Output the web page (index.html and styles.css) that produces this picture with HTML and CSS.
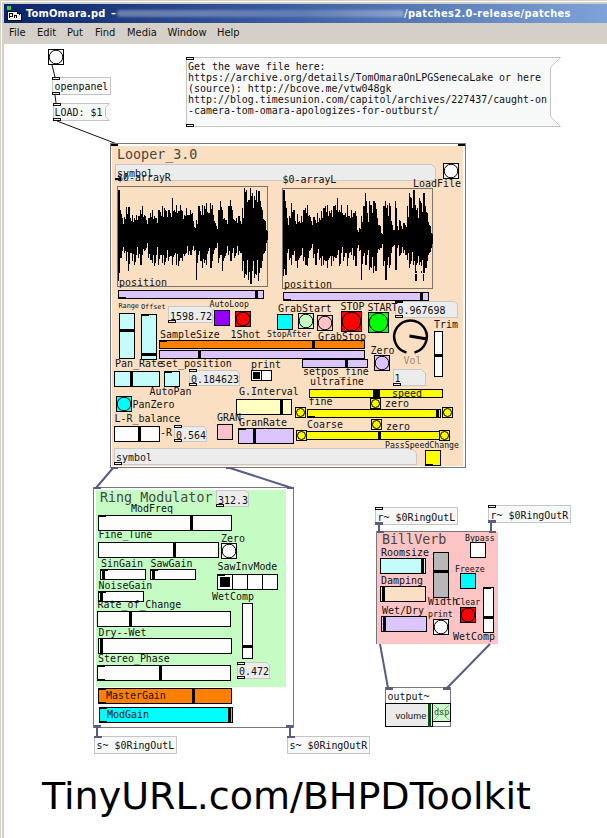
FILE: index.html
```html
<!DOCTYPE html>
<html lang="en">
<head>
<meta charset="utf-8">
<title>TomOmara.pd</title>
<link rel="stylesheet" href="styles.css">
</head>
<body>
<div class="window">
<header class="titlebar">
<svg class="app-icon" width="15" height="16" viewBox="0 0 15 16" shape-rendering="crispEdges"><rect width="4" height="4" fill="#3bd13b"/><path d="M0 5H10V7H14V14H0Z" fill="#eee" stroke="#111"/><path d="M2.5 12V7.500H5.500V10H2.500M7.500 12V9H9.500V12M12.500 8V9" fill="none" stroke="#000"/></svg>
<span class="file">TomOmara.pd</span><span class="dash">–</span><span class="smudge"></span><span class="folder">/patches2.0-release/patches</span>
</header>
<nav class="menu"><span>File</span><span>Edit</span><span>Put</span><span>Find</span><span>Media</span><span>Window</span><span>Help</span></nav>
<main>
<svg class="canvas" width="603" height="794" viewBox="4 44 603 794">
<!-- loader objects -->
<g class="wire"><path d="M52 65L55 77M55 95L56 103M57 121L117 144"/></g>
<g class="box"><rect x="52.500" y="77.500" width="58" height="17"/><path d="M53.500 103.500H109.500L105.500 107.500V116.500L109.500 120.500H53.500Z"/><path d="M186.500 57.500H560.500L550.500 67.500V116.500L560.500 126.500H186.500Z"/></g>
<g class="w"><rect x="48.500" y="49.500" width="15" height="15"/></g><circle cx="56" cy="57" r="6.800"/>
<g class="let"><rect x="52.500" y="77.500" width="7" height="2"/><rect x="52.500" y="92.500" width="7" height="2"/><rect x="53.500" y="103.500" width="7" height="2"/><rect x="53.500" y="118.500" width="7" height="2"/><rect x="186.500" y="57.500" width="7" height="2"/><rect x="186.500" y="124.500" width="7" height="2"/></g>
<text x="54.500" y="90">openpanel</text><text x="54.500" y="115.500">LOAD: $1</text>
<text x="188" y="70">Get the wave file here:</text>
<text x="188" y="81">https://archive.org/details/TomOmaraOnLPGSenecaLake or here</text>
<text x="188" y="92">(source): http://bcove.me/vtw048gk</text>
<text x="188" y="103">http://blog.timesunion.com/capitol/archives/227437/caught-on</text>
<text x="188" y="114">-camera-tom-omara-apologizes-for-outburst/</text>

<!-- Looper -->
<rect class="frame" x="110.500" y="143.500" width="355" height="324"/>
<rect x="112" y="146" width="351" height="320" fill="#fadfc3"/>
<path class="k" d="M111 144h7v2h-7zM458 144h7v2h-7z"/>
<g class="num"><path d="M115.500 164.500H431.500L435.500 168.500V180.500H115.500Z"/><path d="M168.500 306.500H209.500L212.500 309.500V322.500H168.500Z"/><path d="M395.500 301.500H454.500L457.500 304.500V317.500H395.500Z"/><path d="M393.500 369.500H421.500L425.500 373.500V385.500H393.500Z"/><path d="M189.500 370.500H236.500L239.500 373.500V385.500H189.500Z"/><path d="M174.500 426.500H203.500L206.500 429.500V441.500H174.500Z"/><path d="M114.500 448.500H411.500L416.500 453.500V464.500H114.500Z"/></g>
<text class="big" x="117" y="158.700">Looper_3.0</text>
<text x="117" y="177">symbol</text><text x="117" y="181">$0-arrayR</text><text x="282.500" y="183">$0-arrayL</text>
<path class="k" d="M115 178h6v2h-6z"/>
<rect class="plot" x="117.500" y="186.500" width="150" height="100"/><rect class="plot" x="282.500" y="188.500" width="150" height="100"/>
<path class="wave" id="wave-r"/><path class="wave" id="wave-l"/>
<path d="M410.500 270V264M413.500 268v-3M416.500 271v-6M409 273.500h16M418.500 269v-6M421.500 271v-5" stroke="#fadfc3" fill="none" shape-rendering="crispEdges"/>
<text x="119" y="286">position</text><text x="284" y="288">position</text>
<text x="413" y="187">LoadFile</text>
<g class="w"><rect x="443.500" y="163.500" width="15" height="15"/><rect x="434.500" y="331.500" width="8" height="45"/><rect x="251.500" y="370.500" width="20" height="10"/><rect x="114.500" y="426.500" width="45" height="15"/></g>
<g class="v"><rect x="118.500" y="290.500" width="145" height="8"/><rect x="283.500" y="292.500" width="145" height="8"/><rect x="159.500" y="350.500" width="205" height="8"/><rect x="302.500" y="359.500" width="65" height="8"/><rect x="374.500" y="355.500" width="15" height="15"/><rect x="238.500" y="428.500" width="55" height="15"/></g>
<g class="c"><rect x="119.500" y="313.500" width="15" height="45"/><rect x="141.500" y="314.500" width="15" height="45"/><rect x="114.500" y="371.500" width="45" height="15"/><rect x="164.500" y="371.500" width="15" height="15"/></g>
<g class="s"><rect x="214.500" y="310.500" width="15" height="15" fill="#9600ff"/><rect x="235.500" y="311.500" width="15" height="15" fill="#f00"/><rect x="277.500" y="314.500" width="15" height="15" fill="#00fcfc"/><rect x="298.500" y="313.500" width="15" height="15" fill="#c4fcc4"/><rect x="317.500" y="315.500" width="15" height="15" fill="#fcc4c4"/><rect x="341.500" y="311.500" width="20" height="20" fill="#f00"/><rect x="368.500" y="312.500" width="20" height="20" fill="#0f0"/><rect x="159.500" y="340.500" width="205" height="8" fill="#ff7f00"/><rect x="116.500" y="396.500" width="15" height="15" fill="#00fcfc"/><rect x="217.500" y="424.500" width="15" height="15" fill="#fcc0c8"/><rect x="236.500" y="399.500" width="55" height="15" fill="#ffffc0"/></g>
<g class="y"><rect x="309.500" y="389.500" width="133" height="8"/><rect x="307.500" y="409.500" width="133" height="8"/><rect x="306.500" y="431.500" width="133" height="8"/><rect x="370.500" y="398.500" width="10" height="10"/><rect x="295.500" y="407.500" width="10" height="10"/><rect x="442.500" y="407.500" width="10" height="10"/><rect x="371.500" y="419.500" width="10" height="10"/><rect x="296.500" y="430.500" width="10" height="10"/><rect x="439.500" y="430.500" width="10" height="10"/><rect x="425.500" y="450.500" width="15" height="15"/></g>
<circle cx="451" cy="171" r="6.800"/><circle cx="243" cy="319" r="6.800"/><circle cx="306" cy="321" r="6.800"/><circle cx="325" cy="323" r="6.800"/><circle cx="351.500" cy="321.500" r="9.300"/><circle cx="378.500" cy="322.500" r="9.300"/><circle cx="382" cy="363" r="6.800"/><circle cx="124" cy="404" r="6.800"/>
<circle cx="375.500" cy="403.500" r="4"/><circle cx="300.500" cy="412.500" r="4"/><circle cx="447.500" cy="412.500" r="4"/><circle cx="376.500" cy="424.500" r="4"/><circle cx="301.500" cy="435.500" r="4"/><circle cx="444.500" cy="435.500" r="4"/>
<path class="k" d="M255 291h3v8h-3zM420 293h3v8h-3zM120 329h15v3h-15zM142 353h15v3h-15zM312 341h3v8h-3zM198 351h3v8h-3zM345 360h3v8h-3zM435 354h8v3h-8zM130 372h3v15h-3zM138 427h3v15h-3zM280 400h3v15h-3zM253 429h3v15h-3zM373 390h7v8h-7zM436 410h3v8h-3zM378 432h3v8h-3zM253 372h7v7h-7zM261 371h1v10h-1zM119 297h7v1h-7zM284 299h7v1h-7zM142 315h7v1h-7zM160 341h7v1h-7zM165 372h7v1h-7zM308 416h7v1h-7zM239 429h7v1h-7zM426 464h7v1h-7z"/>
<g class="let"><rect x="168.500" y="320.500" width="7" height="2"/><rect x="395.500" y="301.500" width="7" height="1"/><rect x="395.500" y="315.500" width="7" height="2"/><rect x="393.500" y="383.500" width="7" height="2"/><rect x="189.500" y="369.500" width="7" height="2"/><rect x="189.500" y="383.500" width="7" height="2"/><rect x="174.500" y="425.500" width="7" height="2"/><rect x="174.500" y="439.500" width="7" height="2"/><rect x="114.500" y="462.500" width="7" height="2"/></g>
<path class="dial" d="M406.500 352.500A16.300 16.300 0 1 1 414.500 352.500"/><path class="needle" d="M409.500 336L427 339"/>
<text class="tiny" x="118.500" y="308">Range</text><text class="tiny" x="141" y="309">Offset</text>
<text x="170" y="319.500">1598.72</text><text class="small" x="209.500" y="307">AutoLoop</text>
<text x="160" y="338">SampleSize</text><text x="230.500" y="337.500">1Shot</text><text class="small" x="267" y="337">StopAfter</text><text x="318" y="339.500">GrabStop</text>
<text x="278" y="311.500">GrabStart</text><text x="340.500" y="310">STOP</text><text x="367.500" y="311">START</text><text x="397.500" y="314">0.967698</text>
<text x="434" y="328">Trim</text><text class="vol" x="403.500" y="364">Vol</text><text x="370.500" y="353.500">Zero</text>
<text x="115" y="367">Pan_Rate</text><text x="160" y="366.500">set_position</text><text x="251" y="367.500">print</text>
<text x="303" y="375">setpos_fine</text><text x="310" y="385">ultrafine</text><text x="394.500" y="382">1</text>
<text x="191" y="382.500">0.184623</text><text x="149.500" y="395">AutoPan</text><text x="132.500" y="407.500">PanZero</text><text x="239" y="394.500">G.Interval</text>
<text x="114.500" y="422">L-R_balance</text><text x="160" y="436">-R</text><text x="176" y="438.500">0.564</text><text x="217" y="421">GRAN</text><text x="239" y="426">GranRate</text>
<text x="392" y="397">speed</text><text x="308.500" y="405">fine</text><text x="385" y="407">zero</text><text x="307" y="427.500">Coarse</text><text x="386" y="429.500">zero</text>
<text class="small" x="385" y="448">PassSpeedChange</text><text x="116" y="461">symbol</text>

<!-- Ring modulator -->
<rect class="frame" x="93.500" y="487.500" width="200" height="240"/>
<rect x="96" y="490" width="190" height="197" fill="#c4fcc4"/>
<g class="signal"><path d="M113 468L96 488M230 468L292 488M97 727V737M290 727V737"/></g>
<path class="sig" d="M94 487h7v2h-7zM287 487h7v2h-7zM94 725h7v3h-7zM286 725h7v3h-7zM111 467h7v2h-7zM226 467h7v2h-7z"/>
<g class="box"><rect x="94.500" y="736.500" width="82" height="17"/><rect x="287.500" y="736.500" width="82" height="17"/></g>
<path class="sig" d="M94 736h8v2h-8zM287 736h8v2h-8z"/>
<g class="num"><path d="M216.500 490.500H245.500L248.500 493.500V506.500H216.500Z"/><path d="M237.500 662.500H266.500L269.500 665.500V678.500H237.500Z"/></g>
<g class="w"><rect x="98.500" y="515.500" width="133" height="15"/><rect x="98.500" y="542.500" width="120" height="15"/><rect x="221.500" y="543.500" width="15" height="15"/><rect x="100.500" y="569.500" width="45" height="10"/><rect x="150.500" y="569.500" width="45" height="10"/><rect x="217.500" y="574.500" width="60" height="15"/><rect x="98.500" y="591.500" width="45" height="10"/><rect x="242.500" y="603.500" width="10" height="55"/><rect x="97.500" y="611.500" width="133" height="15"/><rect x="98.500" y="638.500" width="133" height="15"/><rect x="97.500" y="665.500" width="133" height="15"/></g>
<g class="s"><rect x="98.500" y="688.500" width="133" height="15" fill="#ff7f00"/><rect x="99.500" y="707.500" width="133" height="15" fill="#00fcfc"/></g>
<circle cx="229" cy="551" r="6.800"/>
<path class="k" d="M190 516h3v15h-3zM173 543h3v15h-3zM102 570h3v10h-3zM152 570h3v10h-3zM100 592h3v10h-3zM220 577h10v10h-10zM232 575h1v15h-1zM247 575h1v15h-1zM262 575h1v15h-1zM243 645h10v3h-10zM129 612h3v15h-3zM100 639h3v15h-3zM159 666h3v15h-3zM192 689h3v15h-3zM228 708h3v15h-3zM99 516h7v1h-7zM101 570h7v1h-7zM151 570h7v1h-7zM99 592h7v1h-7zM218 575h7v1h-7zM98 666h7v1h-7zM98 679h7v1h-7zM99 689h7v1h-7zM99 702h7v1h-7zM100 708h7v1h-7zM100 721h7v1h-7z"/>
<g class="let"><rect x="216.500" y="504.500" width="7" height="2"/><rect x="237.500" y="662.500" width="7" height="2"/><rect x="237.500" y="676.500" width="7" height="2"/></g>
<text class="big" x="100" y="501.500">Ring_Modulator</text><text x="218" y="503.500">312.3</text>
<text x="131" y="511.500">ModFreq</text><text x="98.500" y="538">Fine_Tune</text><text x="221" y="542">Zero</text><text x="101" y="567">SinGain</text><text x="150.500" y="567">SawGain</text>
<text x="217.500" y="570">SawInvMode</text><text x="98.500" y="589">NoiseGain</text><text x="212" y="600">WetComp</text><text x="97.500" y="607.500">Rate_of_Change</text>
<text x="98.500" y="636">Dry--Wet</text><text x="98" y="661.500">Stereo_Phase</text><text x="239" y="675">0.472</text><text x="106" y="698.500">MasterGain</text><text x="107" y="717.500">ModGain</text>
<text x="96.500" y="749">s~ $0RingOutL</text><text x="289.500" y="749">s~ $0RingOutR</text>

<!-- BillVerb -->
<g class="box"><rect x="375.500" y="507.500" width="82" height="17"/><rect x="488.500" y="505.500" width="82" height="17"/></g>
<g class="let"><rect x="375.500" y="507.500" width="7" height="2"/><rect x="488.500" y="505.500" width="7" height="2"/></g>
<rect x="377" y="532" width="121" height="112" fill="#fcc4c4"/>
<path d="M376.500 644V531.500H496" fill="none" stroke="#777"/>
<g class="signal"><path d="M379 524V532M491 522V532M380 644L388 688M490 644L447 688"/></g>
<path class="sig" d="M375 522h8v3h-8zM488 520h8v3h-8zM377 531h7v2h-7zM489 531h7v2h-7z"/>
<g class="s"><rect x="380.500" y="558.500" width="45" height="15" fill="#c4fcfc"/><rect x="380.500" y="586.500" width="45" height="15" fill="#fadfc3"/><rect x="381.500" y="616.500" width="45" height="15" fill="#dcc4fc"/><rect x="433.500" y="552.500" width="15" height="45" fill="#b8b8b8"/><rect x="460.500" y="573.500" width="15" height="15" fill="#00fcfc"/><rect x="460.500" y="607.500" width="15" height="15" fill="#f00"/></g>
<g class="w"><rect x="470.500" y="542.500" width="15" height="15"/><rect x="433.500" y="619.500" width="15" height="15"/><rect x="483.500" y="587.500" width="10" height="45"/></g>
<circle cx="441" cy="627" r="6.800"/><circle cx="468" cy="615" r="6.800"/>
<path class="k" d="M421 559h3v15h-3zM382 587h3v15h-3zM383 617h3v15h-3zM434 570h15v3h-15zM484 616h10v3h-10zM484 588h7v1h-7z"/>
<text x="377.500" y="521">r~ $0RingOutL</text><text x="490.500" y="518.500">r~ $0RingOutR</text>
<text class="big" x="382" y="543.500">BillVerb</text><text x="381" y="556">Roomsize</text><text x="381" y="584">Damping</text><text x="382" y="614">Wet/Dry</text><text x="428" y="605">Width</text>
<text class="small" x="465" y="541">Bypass</text><text class="small" x="455" y="572">Freeze</text><text class="small" x="455.500" y="605">Clear</text><text class="small" x="428" y="617">print</text><text x="453" y="640">WetComp</text>

<!-- output -->
<rect class="frame" x="385.500" y="687.500" width="65" height="39"/>
<path class="sig" d="M386 687h7v3h-7zM443 687h7v3h-7z"/>
<g class="s"><rect x="385.500" y="703.500" width="47" height="23" fill="#ebebeb"/><rect x="432.500" y="703.500" width="18" height="18" fill="#c8fcc8"/></g>
<path d="M428 704h3v23h-3z" fill="#0a4a1a"/><path d="M434 705L449 720M449 705L434 720" stroke="#9ab09a" fill="none"/>
<text x="387.500" y="700">output~</text><text class="sans" x="395.500" y="719" textLength="31">volume</text><text class="dsp" x="434" y="715">dsp</text>
<text class="headline" x="42" y="808.500" textLength="489" lengthAdjust="spacingAndGlyphs">TinyURL.com/BHPDToolkit</text>
</svg>
</main>
</div>
<script src="waves.js"></script>
</body>
</html>
```
FILE: styles.css
```css
body { margin: 0; background: #fff; }
.window { box-sizing: border-box; width: 607px; height: 838px; overflow: hidden; padding: 4px 0 0 4px; background: #d4d0c8; box-shadow: inset 1px 1px #d4d0c8, inset 2px 2px #fff; }
.titlebar { display: flex; align-items: center; height: 19px; padding-left: 3px; background: linear-gradient(90deg, #0a246a, #3a5c9e 45%, #7ea3d8); color: #fff; font: bold 11px/19px "DejaVu Sans Condensed", "DejaVu Sans", sans-serif; white-space: nowrap; }
.app-icon { flex: none; width: 15px; margin-right: 4px; }
.file { flex: none; width: 85px; letter-spacing: .2px; }
.dash { flex: none; width: 6px; }
.smudge { flex: none; width: 287px; height: 7px; border-radius: 4px; background: linear-gradient(90deg, #8193bb, #7c90bd 30%, #6c86bd 65%, #9fb1d6); filter: blur(1px); opacity: .75; }
.folder { flex: none; letter-spacing: .33px; }
.menu { display: grid; grid-template-columns: 28px 30px 28px 32px 40.5px 49.5px 30px; height: 21px; padding-left: 5px; color: #111; font: 11px/20px "DejaVu Sans Condensed", "DejaVu Sans", sans-serif; }
.canvas { display: block; background: #fff; }
text { font-family: "DejaVu Sans Mono", monospace; font-size: 9.95px; fill: #111; white-space: pre; }
.big { font-size: 13.35px; fill: #4a4640; }
.small { font-size: 8.2px; }
.tiny { font-size: 6.8px; }
.vol { fill: #9c8a76; }
.sans { font-family: "Liberation Sans", sans-serif; font-size: 9.500px; }
.dsp { font-size: 8.500px; fill: #355035; }
.headline { font-family: "DejaVu Sans", sans-serif; font-size: 38px; fill: #000; }
rect, .k, .sig, .num path { shape-rendering: crispEdges; }
circle { fill: none; stroke: #000; stroke-width: 1; }
.box rect, .box path { fill: #f7f8f8; stroke: #c4c6c6; }
.num path { fill: #ececec; stroke: #c6c8ca; }
.w rect, .v rect, .c rect, .y rect, .s rect { stroke: #000; }
.w rect { fill: #fdfdfd; }
.v rect { fill: #dcc4fc; }
.c rect { fill: #c4fcfc; }
.y rect { fill: #fcfc00; }
.let rect { fill: #eee; stroke: #111; }
.k { fill: #000; }
.sig { fill: #5b5b88; }
.frame { fill: #fff; stroke: #777; }
.plot { fill: none; stroke: #7c7468; }
.wave { fill: none; stroke: #000; stroke-width: 1; shape-rendering: crispEdges; }
.wire path { fill: none; stroke: #111; }
.signal path { fill: none; stroke: #5b5b88; stroke-width: 2; }
.dial { fill: none; stroke: #000; stroke-width: 2.500; }
.needle { stroke: #000; stroke-width: 3; }
```
FILE: waves.js
```js
// Top and bottom of each two-pixel slice, in thirds of a pixel below y.
const right = {
  x: 118.5, y: 138, mid: 290,
  top: [155,215,240,238,207,208,240,230,240,230,235,215,205,230,245,240,225,215,235,240,215,222,205,210,218,215,225,180,215,200,220,200,218,230,210,230,215,225,268,245,205,218,200,205,195,225,195,200,250,265,215,190,215,240,245,205,185,215,245,240,235,250,210,150,155,185,150,165,175,155,160,190,215,245,275],
  bottom: [430,360,340,345,370,398,345,370,380,350,360,380,350,340,330,360,365,375,385,350,380,350,375,380,360,370,355,380,350,380,385,360,370,355,345,350,350,335,340,425,350,370,390,375,380,340,390,370,335,330,375,350,400,360,345,350,370,345,360,345,350,345,400,420,410,425,438,400,420,410,430,390,370,345,315]
};
const left = {
  x: 283.5, y: 138, mid: 296,
  top: [155,190,240,235,195,215,250,228,250,235,215,210,200,230,250,238,245,225,240,220,210,205,200,218,215,205,200,180,215,200,230,225,200,235,215,225,220,275,270,235,205,165,225,190,200,190,195,240,260,285,205,190,200,195,250,275,190,265,245,265,255,262,205,165,180,155,200,210,180,195,165,205,225,260,285],
  bottom: [415,410,345,365,380,350,370,390,360,350,370,380,385,340,330,360,380,345,365,385,380,370,390,360,385,370,360,350,385,345,370,345,385,345,350,365,385,330,340,425,355,380,350,395,390,405,400,345,335,330,385,425,380,390,345,325,395,330,355,345,345,350,365,390,370,385,430,375,380,405,430,390,370,345,330]
};
// Each slice is a full-height peak followed by a shorter neighbour.
function wavePath(wave) {
  return wave.top.map((t, i) => {
    const b = wave.bottom[i];
    const up = 1 - ((i * 7) % 5) * 0.09;
    const down = 1 - ((i * 3 + 2) % 5) * 0.09;
    const x = wave.x + i * 2;
    const line = (px, a, c) => `M${px} ${Math.round(wave.y + a / 3)}V${Math.round(wave.y + c / 3)}`;
    return line(x, t, b) + line(x + 1, wave.mid - (wave.mid - t) * up, wave.mid + (b - wave.mid) * down);
  }).join("");
}
document.getElementById("wave-r").setAttribute("d", wavePath(right));
document.getElementById("wave-l").setAttribute("d", wavePath(left));
```
